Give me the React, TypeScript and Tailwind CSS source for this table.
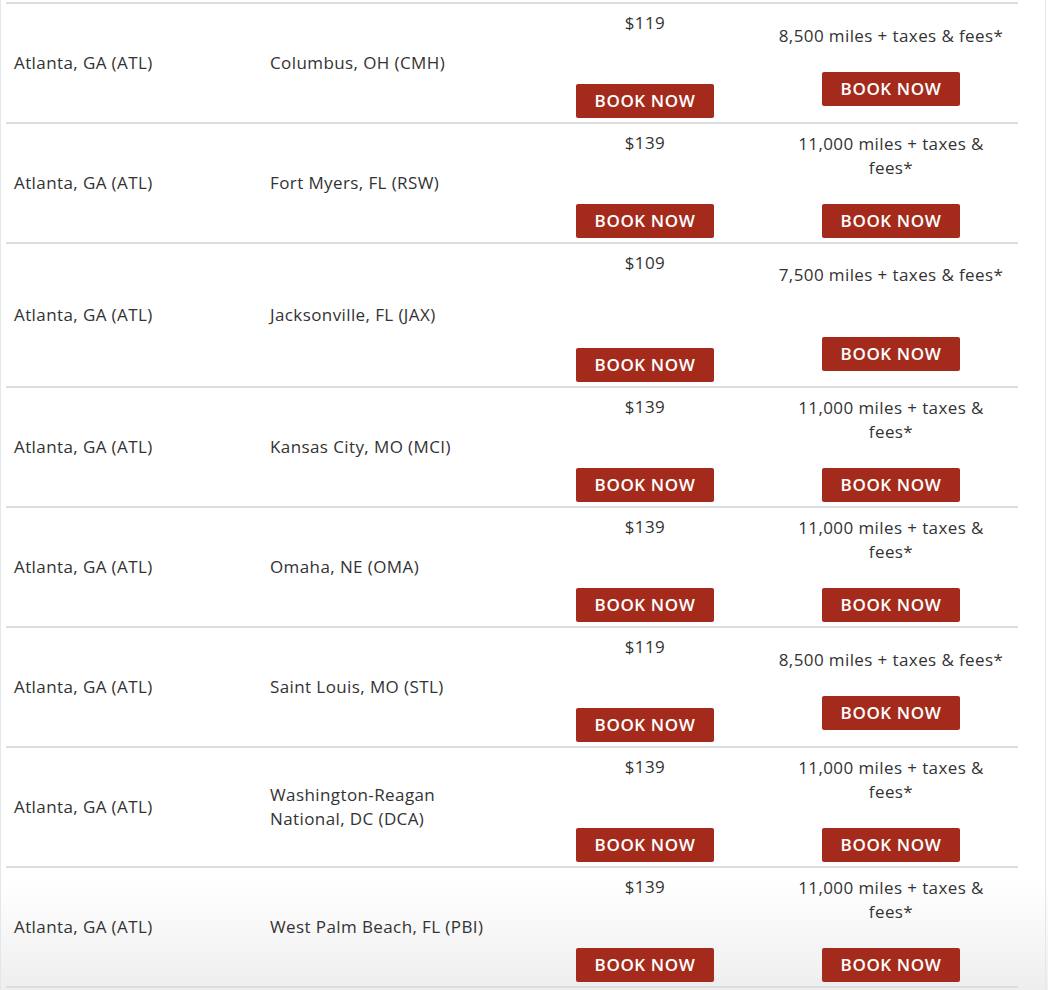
const rows = [
  { dest: 'Columbus, OH (CMH)', price: '$119', miles: '8,500 miles + taxes & fees*', tall: false },
  { dest: 'Fort Myers, FL (RSW)', price: '$139', miles: '11,000 miles + taxes & fees*', tall: false },
  { dest: 'Jacksonville, FL (JAX)', price: '$109', miles: '7,500 miles + taxes & fees*', tall: true },
  { dest: 'Kansas City, MO (MCI)', price: '$139', miles: '11,000 miles + taxes & fees*', tall: false },
  { dest: 'Omaha, NE (OMA)', price: '$139', miles: '11,000 miles + taxes & fees*', tall: false },
  { dest: 'Saint Louis, MO (STL)', price: '$119', miles: '8,500 miles + taxes & fees*', tall: false },
  { dest: 'Washington-Reagan National, DC (DCA)', price: '$139', miles: '11,000 miles + taxes & fees*', tall: false },
  { dest: 'West Palm Beach, FL (PBI)', price: '$139', miles: '11,000 miles + taxes & fees*', tall: false },
]

function BookButton() {
  return (
    <button className="w-[138px] h-[34px] rounded-[2px] bg-[#a42b1c] text-white text-[17px] font-semibold uppercase leading-[34px] tracking-[0.6px]">
      Book Now
    </button>
  )
}

export default function App() {
  return (
    <div
      className="w-[1048px] h-[990px] overflow-hidden bg-[linear-gradient(to_bottom,#ffffff_880px,#eeeeee_990px)] text-[#333333] text-[17px] leading-6 tracking-[0.4px]"
      style={{ fontFamily: '"Open Sans", "Liberation Sans", sans-serif' }}
    >
      <div className="w-[1046px] h-[990px] border-l border-r border-[#e6e6e6] pl-[5px] pt-[2px]">
        <div className="w-[1012px] border-b-2 border-[#dddddd]">
          {rows.map(row => (
            <div
              key={row.dest}
              className={`grid grid-cols-[256px_264px_238px_254px] border-t-2 border-[#dddddd] ${row.tall ? 'h-[144px]' : 'h-[120px]'}`}
            >
              <div className="flex items-center px-2">Atlanta, GA (ATL)</div>
              <div className="flex items-center pl-2 pr-6">{row.dest}</div>
              <div className="flex flex-col items-center justify-between pt-[7px] pb-1">
                <span>{row.price}</span>
                <BookButton />
              </div>
              <div className="flex flex-col items-center justify-center px-3 pt-1 text-center">
                <span>{row.miles}</span>
                <div className={row.tall ? 'mt-[50px]' : 'mt-6'}>
                  <BookButton />
                </div>
              </div>
            </div>
          ))}
        </div>
      </div>
    </div>
  )
}
